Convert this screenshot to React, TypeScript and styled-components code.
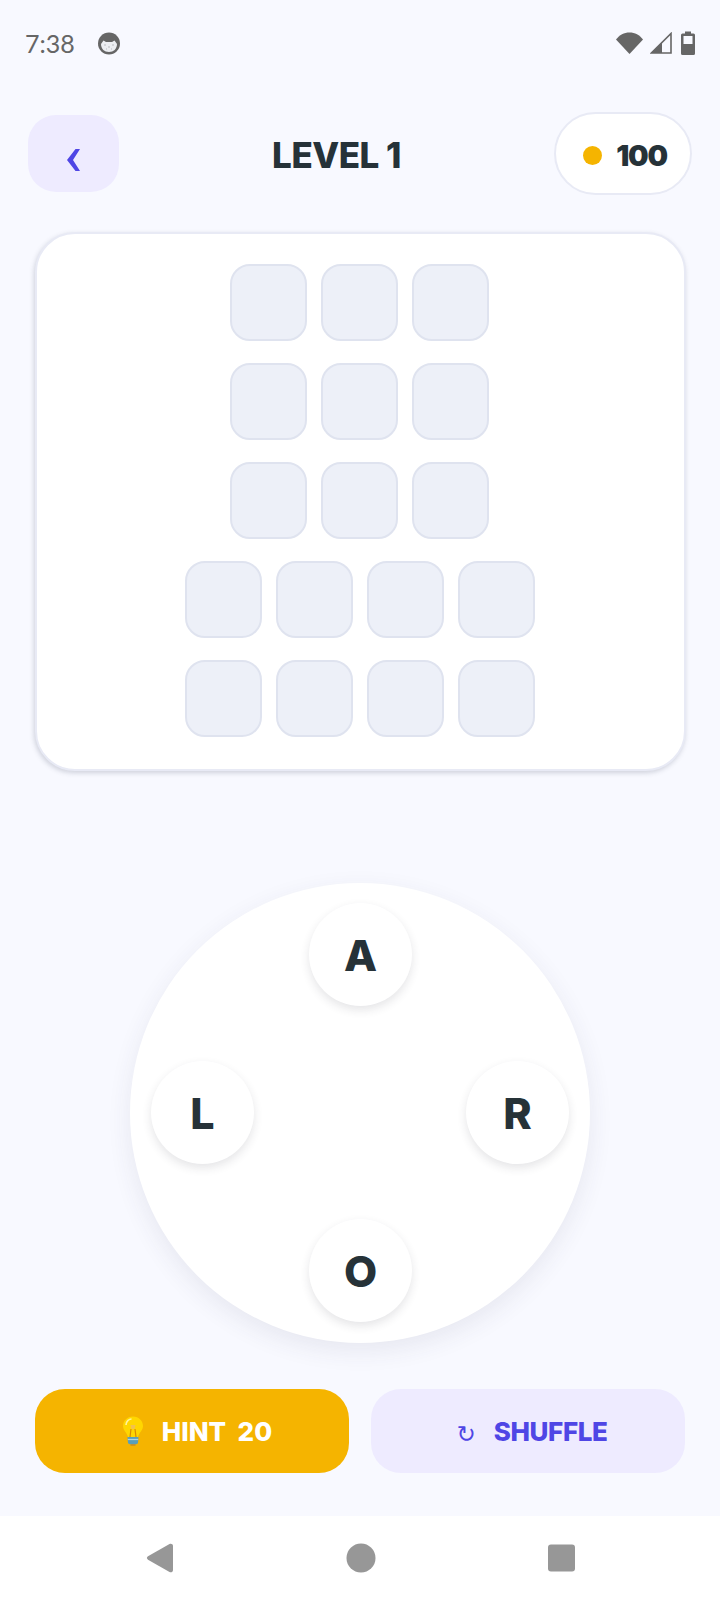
import React from 'react';
import styled, { createGlobalStyle } from 'styled-components';

const GlobalStyle = createGlobalStyle`
  html, body {
    margin: 0;
    padding: 0;
    background: #f8f9ff;
  }
  * {
    box-sizing: border-box;
  }
`;

const Screen = styled.div`
  width: 720px;
  height: 1600px;
  display: flex;
  flex-direction: column;
  background: #f8f9ff;
  font-family: 'Inter', 'Lato', sans-serif;
  overflow: hidden;
`;

const StatusBar = styled.div`
  height: 88px;
  display: flex;
  align-items: center;
  justify-content: space-between;
  padding: 0 25px 2px 25px;
`;

const StatusLeft = styled.div`
  display: flex;
  align-items: center;
  gap: 23px;
`;

const Clock = styled.span`
  font-family: 'Lato', sans-serif;
  font-size: 25px;
  color: #666666;
`;

const StatusIcons = styled.div`
  display: flex;
  align-items: center;
  gap: 7px;
`;

const Header = styled.div`
  display: flex;
  align-items: center;
  justify-content: space-between;
  height: 83px;
  margin: 24px 0 2px;
  padding: 0 28px;
`;

const BackButton = styled.div`
  width: 91px;
  height: 77px;
  border-radius: 28px;
  background: #eeebff;
  color: #4f46e5;
  display: flex;
  align-items: center;
  justify-content: center;
`;

const Title = styled.h1`
  margin: 0;
  padding-top: 3px;
  font-size: 35px;
  font-weight: 800;
  color: #263238;
  letter-spacing: -0.5px;
`;

const CoinPill = styled.div`
  width: 138px;
  height: 83px;
  padding: 3px 0 0 4px;
  border-radius: 42px;
  border: 2px solid #e8eaf5;
  background: #ffffff;
  display: flex;
  align-items: center;
  justify-content: center;
  gap: 14px;
  font-size: 29px;
  font-weight: 900;
  letter-spacing: -1.2px;
  color: #263238;
`;

const CoinDot = styled.span`
  width: 19px;
  height: 19px;
  margin-top: 1px;
  border-radius: 50%;
  background: #f5b400;
`;

const BoardCard = styled.div`
  width: 651px;
  height: 539px;
  margin: 35px auto 0;
  padding: 30px 1px 0 0;
  background: #ffffff;
  border: 2px solid #e8eaf5;
  border-radius: 40px;
  box-shadow: -1px 2px 5px rgba(60, 70, 90, 0.22);
  display: flex;
  flex-direction: column;
  align-items: center;
  gap: 22px;
`;

const TileRow = styled.div`
  display: flex;
  gap: 14px;
`;

const Tile = styled.div`
  width: 77px;
  height: 77px;
  border-radius: 20px;
  background: #edf0f8;
  border: 2px solid #dfe3ef;
`;

const WheelArea = styled.div`
  flex: 1;
  display: flex;
  align-items: flex-start;
  justify-content: center;
  padding-top: 112px;
`;

const Wheel = styled.div`
  position: relative;
  width: 460px;
  height: 460px;
  border-radius: 50%;
  background: #ffffff;
  box-shadow: 0 8px 24px rgba(50, 60, 90, 0.09);
`;

const LetterNode = styled.div<{ $x: number; $y: number }>`
  position: absolute;
  left: ${({ $x }) => $x}px;
  top: ${({ $y }) => $y}px;
  width: 103px;
  height: 103px;
  border-radius: 50%;
  background: #ffffff;
  box-shadow: 0 4px 10px rgba(40, 45, 60, 0.12);
  display: flex;
  align-items: center;
  justify-content: center;
  font-size: 43px;
  font-weight: 800;
  color: #263238;
`;

const Actions = styled.div`
  display: flex;
  gap: 22px;
  padding: 0 35px;
  margin-bottom: 43px;
`;

const ActionButton = styled.div<{ $primary?: boolean }>`
  flex: 1;
  height: 84px;
  border-radius: 30px;
  background: ${({ $primary }) => ($primary ? '#f5b400' : '#eeebff')};
  color: ${({ $primary }) => ($primary ? '#ffffff' : '#4f46e5')};
  display: flex;
  align-items: center;
  justify-content: center;
  gap: 18px;
  font-size: 26px;
  font-weight: 800;
  white-space: pre;
`;

const ShuffleGlyph = styled.span`
  font-family: 'DejaVu Sans', sans-serif;
  font-size: 23px;
  font-weight: 400;
  margin: 5px 0 0 8px;
`;

const ShuffleLabel = styled.span`
  letter-spacing: -0.4px;
`;

const BulbWrap = styled.span`
  display: flex;
  margin-left: 10px;
`;

const NavBar = styled.div`
  height: 84px;
  background: #ffffff;
  display: flex;
  align-items: center;
  justify-content: space-between;
  padding: 0 145px 0 146px;
`;

const NotificationIcon = () => (
  <svg width="22" height="23" viewBox="0 0 22 23">
    <circle cx="11" cy="11.5" r="11" fill="#666666" />
    <path d="M3 12 L5.5 8.5 L8 10 H14 L16.5 8.5 L19 12 C19 17 15.5 20 11 20 C6.5 20 3 17 3 12Z" fill="#eceef2" />
    <path d="M6 13h2M10 15h2M14 13h2M8 17h1M13 17h1" stroke="#b9bbc0" strokeWidth="1" />
  </svg>
);

const WifiIcon = () => (
  <svg width="27" height="22" viewBox="0 0 27 22">
    <path d="M0 7.5 C3.5 3 8 0.5 13.5 0.5 C19 0.5 23.5 3 27 7.5 L13.5 22 Z" fill="#666666" />
  </svg>
);

const SignalIcon = () => (
  <svg width="24" height="22" viewBox="0 0 24 22">
    <path d="M21 1.5 V21 H1.5 Z" fill="none" stroke="#666666" strokeWidth="1.6" />
    <path d="M12 10.5 V21 H1.5 Z" fill="#666666" />
  </svg>
);

const BatteryIcon = () => (
  <svg width="14" height="24" viewBox="0 0 14 24">
    <path d="M4 0.5 H10 V2.5 H12.5 A1.5 1.5 0 0 1 14 4 V22.5 A1.5 1.5 0 0 1 12.5 24 H1.5 A1.5 1.5 0 0 1 0 22.5 V4 A1.5 1.5 0 0 1 1.5 2.5 H4 Z" fill="#666666" />
    <rect x="2.5" y="5" width="9" height="8" fill="#f8f9ff" />
  </svg>
);

const BackChevron = () => (
  <svg width="13" height="22" viewBox="0 0 13 22" style={{ marginTop: 13 }}>
    <path d="M8.5 0 H13 L6 11 L13 22 H8.5 L0 11 Z" fill="#4f46e5" />
  </svg>
);

const BulbIcon = () => (
  <svg width="22" height="30" viewBox="0 0 22 30">
    <path d="M11 0.5 C5 0.5 1 5 1 10 C1 14.5 5 16.5 6 21 H16 C17 16.5 21 14.5 21 10 C21 5 17 0.5 11 0.5Z" fill="#ffd600" />
    <path d="M4 9 C4 5.5 7 3 9.5 3" stroke="#fff3a0" strokeWidth="1.6" fill="none" />
    <path d="M8.5 9 H13.5 L12.5 13 H9.5 Z" fill="#f2c14e" />
    <path d="M9 13 L8 21 M13 13 L14 21" stroke="#d98a00" strokeWidth="1.2" fill="none" />
    <path d="M5.5 21 H16.5 L16 27 C15 29 7 29 6 27 Z" fill="#5b9fb8" />
    <path d="M5.8 23.5 H16.2" stroke="#a9d5e2" strokeWidth="1.2" />
    <path d="M8.5 29 H13.5" stroke="#c98a20" strokeWidth="1.4" />
  </svg>
);

const NavBackIcon = () => (
  <svg width="28" height="30" viewBox="0 0 28 30">
    <path d="M2 13.3 L23.5 1 C25 0.2 27 1 27 3 V27 C27 29 25 29.8 23.5 29 L2 16.7 C0.5 15.8 0.5 14.2 2 13.3Z" fill="#979797" />
  </svg>
);

const NavHomeIcon = () => (
  <svg width="30" height="30" viewBox="0 0 30 30">
    <circle cx="15" cy="15" r="14.5" fill="#979797" />
  </svg>
);

const NavRecentIcon = () => (
  <svg width="28" height="28" viewBox="0 0 28 28">
    <rect x="1" y="0.5" width="27" height="27" rx="3" fill="#979797" />
  </svg>
);

const rows = [3, 3, 3, 4, 4];

const letters = [
  { ch: 'A', x: 179, y: 20 },
  { ch: 'L', x: 21, y: 178 },
  { ch: 'R', x: 336, y: 178 },
  { ch: 'O', x: 179, y: 336 },
];

export default function App() {
  return (
    <Screen>
      <GlobalStyle />
      <StatusBar>
        <StatusLeft>
          <Clock>7:38</Clock>
          <NotificationIcon />
        </StatusLeft>
        <StatusIcons>
          <WifiIcon />
          <SignalIcon />
          <BatteryIcon />
        </StatusIcons>
      </StatusBar>
      <Header>
        <BackButton>
          <BackChevron />
        </BackButton>
        <Title>LEVEL 1</Title>
        <CoinPill>
          <CoinDot />
          100
        </CoinPill>
      </Header>
      <BoardCard>
        {rows.map((count, i) => (
          <TileRow key={i}>
            {Array.from({ length: count }).map((_, j) => (
              <Tile key={j} />
            ))}
          </TileRow>
        ))}
      </BoardCard>
      <WheelArea>
        <Wheel>
          {letters.map((l) => (
            <LetterNode key={l.ch} $x={l.x} $y={l.y}>
              {l.ch}
            </LetterNode>
          ))}
        </Wheel>
      </WheelArea>
      <Actions>
        <ActionButton $primary>
          <BulbWrap>
            <BulbIcon />
          </BulbWrap>
          {'HINT  20'}
        </ActionButton>
        <ActionButton>
          <ShuffleGlyph>↻</ShuffleGlyph>
          <ShuffleLabel>SHUFFLE</ShuffleLabel>
        </ActionButton>
      </Actions>
      <NavBar>
        <NavBackIcon />
        <NavHomeIcon />
        <NavRecentIcon />
      </NavBar>
    </Screen>
  );
}
